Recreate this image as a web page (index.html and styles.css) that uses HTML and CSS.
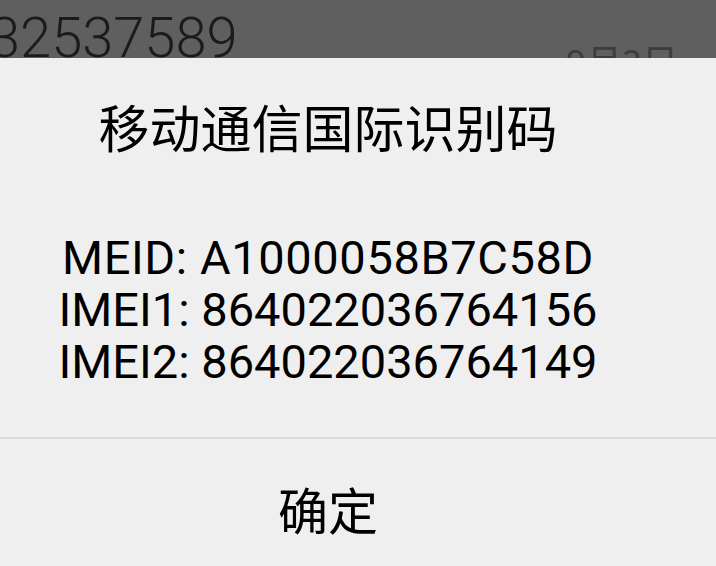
FILE: index.html
```html
<!DOCTYPE html>
<html>

<head>
	<title>MEID</title>
	<link rel="stylesheet" href="styles.css">
</head>

<body>
	<div class="backdrop">
		<span class="number">32537589</span>
		<span class="date">9月3日</span>
	</div>

	<div class="dialog">
		<h1 class="title">移动通信国际识别码</h1>
		<div class="info">
			<p>MEID: A1000058B7C58D</p>
			<p>IMEI1: 864022036764156</p>
			<p>IMEI2: 864022036764149</p>
		</div>
		<div class="actions">
			<button type="button">确定</button>
		</div>
	</div>
</body>

</html>
```

FILE: styles.css
```css
body {
	margin: 0;
	padding: 0;
	font-family: Roboto, "Noto Sans CJK SC", sans-serif;
	background-color: #efefef;
	color: #000;
	overflow: hidden;
}

.backdrop {
	height: 58px;
	background-color: #5f5f5f;
	overflow: hidden;
	display: flex;
	justify-content: space-between;
	align-items: flex-start;
}

.number {
	margin-left: -11px;
	margin-top: 6px;
	font-size: 56px;
	font-weight: 300;
	line-height: 64px;
	color: #1b1b1b;
}

.date {
	margin-right: 38px;
	margin-top: 40px;
	font-family: "Noto Sans CJK SC", sans-serif;
	font-size: 36px;
	line-height: 40px;
	color: #3c3c3c;
}

.dialog {
	background-color: #efefef;
	padding-right: 60px;
}

.title {
	margin: 0;
	padding-top: 38px;
	text-align: center;
	font-family: "Noto Sans CJK SC", sans-serif;
	font-weight: normal;
	font-size: 51px;
	line-height: 60px;
}

.info {
	margin-top: 76px;
	text-align: center;
	font-size: 47px;
	line-height: 52px;
}

.info p {
	margin: 0;
}

.info p:first-child {
	letter-spacing: 0.6px;
}

.actions {
	margin-top: 49px;
	margin-right: -60px;
	padding-right: 60px;
	border-top: 2px solid #dcdcdc;
	text-align: center;
}

.actions button {
	margin-top: 37px;
	padding: 0;
	border: none;
	background: none;
	font-family: "Noto Sans CJK SC", sans-serif;
	font-size: 50px;
	line-height: 64px;
	color: #000;
}
```
